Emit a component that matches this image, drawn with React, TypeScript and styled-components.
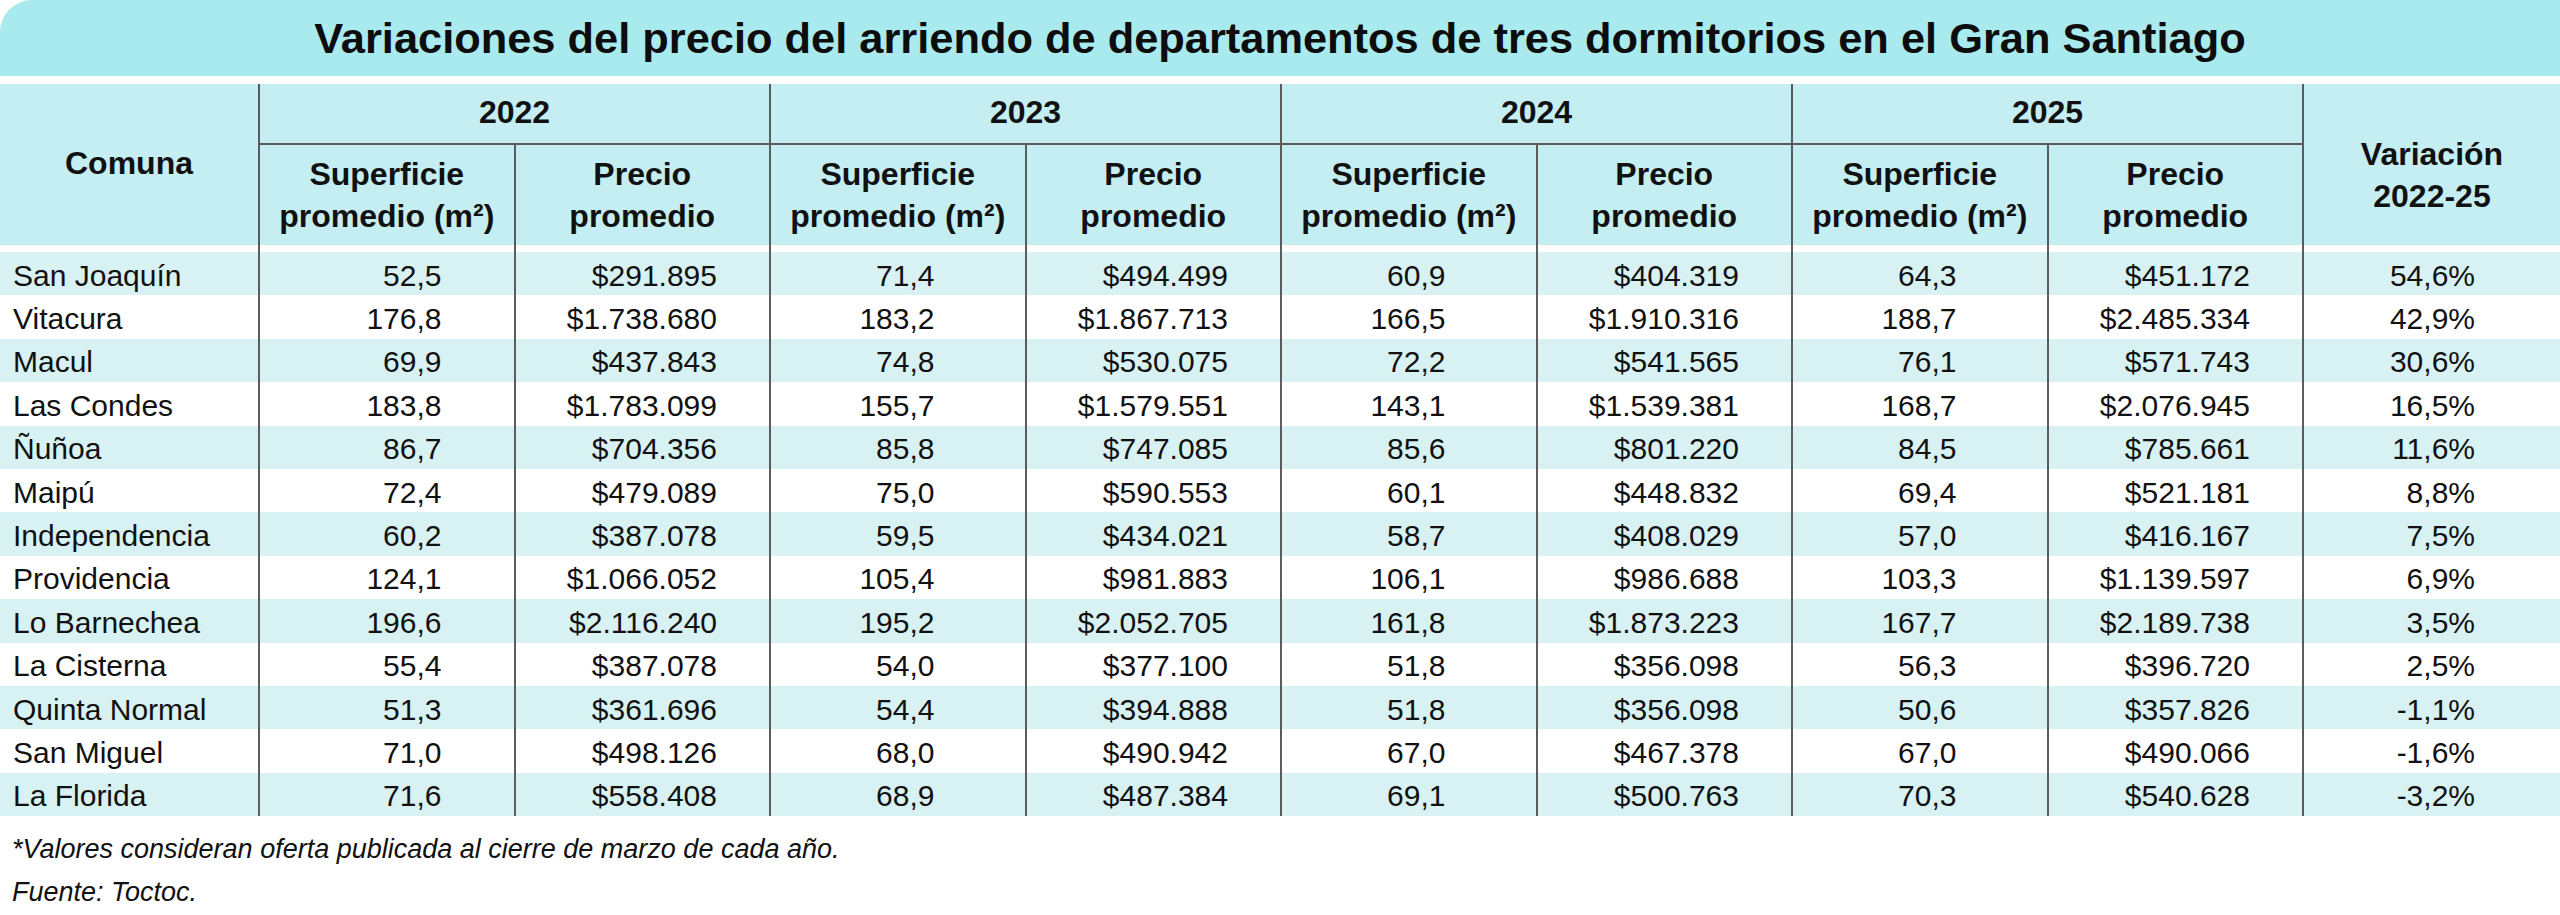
import styled, { createGlobalStyle } from "styled-components";

const GlobalStyle = createGlobalStyle`
  * {
    box-sizing: border-box;
  }
  body {
    margin: 0;
    background: #ffffff;
    font-family: "Liberation Sans", Arial, sans-serif;
    color: #111111;
  }
`;

const COLUMNS = "258px repeat(8, 255.5px) 1fr";
const LINE = "2px solid #5c5c5c";

const Page = styled.div`
  width: 2560px;
  height: 915px;
  overflow: hidden;
`;

const TitleBar = styled.h1`
  margin: 0 0 8px;
  height: 76px;
  display: flex;
  align-items: center;
  justify-content: center;
  background: #a8eaee;
  border-top-left-radius: 32px;
  font-size: 43.4px;
  font-weight: 700;
  color: #0d0d0d;
`;

const HeaderGrid = styled.div`
  display: grid;
  grid-template-columns: ${COLUMNS};
  grid-template-rows: 59px 102px;
  background: #c4eef2;
`;

const HeadCell = styled.div<{ $rows?: number; $cols?: number; $sub?: boolean; $drop?: number }>`
  grid-row: span ${(p) => p.$rows || 1};
  grid-column: span ${(p) => p.$cols || 1};
  display: flex;
  align-items: center;
  justify-content: center;
  text-align: center;
  font-size: 32px;
  font-weight: 700;
  line-height: 42px;
  padding-top: ${(p) => p.$drop || 0}px;
  padding-bottom: ${(p) => (p.$sub || p.$drop ? "0" : "4px")};
  border-top: ${(p) => (p.$sub ? LINE : "none")};

  &:not(:first-child) {
    border-left: ${LINE};
  }
`;

const Body = styled.div`
  display: flex;
  flex-direction: column;
`;

const Row = styled.div<{ $shade?: boolean; $gap?: boolean }>`
  display: grid;
  grid-template-columns: ${COLUMNS};
  height: ${(p) => (p.$gap ? "7px" : "43.4px")};
  background: ${(p) => (p.$shade ? "#d8f1f3" : "#ffffff")};
`;

const Cell = styled.div<{ $left?: boolean; $pad: number }>`
  display: flex;
  align-items: center;
  justify-content: ${(p) => (p.$left ? "flex-start" : "flex-end")};
  padding-top: 4px;
  padding-left: ${(p) => (p.$left ? p.$pad : 0)}px;
  padding-right: ${(p) => (p.$left ? 0 : p.$pad)}px;
  font-size: 30px;
  white-space: nowrap;

  &:not(:first-child) {
    border-left: ${LINE};
  }
`;

const Notes = styled.div`
  margin-top: 12px;
  padding-left: 12px;
  font-size: 27px;
  font-style: italic;
  line-height: 43px;
`;

const YEARS = ["2022", "2023", "2024", "2025"];

// padding-right for each value column, left to right
const PADS = [72, 52, 90, 52, 90, 52, 90, 52, 85];

const DATA: string[][] = [
  ["San Joaquín", "52,5", "$291.895", "71,4", "$494.499", "60,9", "$404.319", "64,3", "$451.172", "54,6%"],
  ["Vitacura", "176,8", "$1.738.680", "183,2", "$1.867.713", "166,5", "$1.910.316", "188,7", "$2.485.334", "42,9%"],
  ["Macul", "69,9", "$437.843", "74,8", "$530.075", "72,2", "$541.565", "76,1", "$571.743", "30,6%"],
  ["Las Condes", "183,8", "$1.783.099", "155,7", "$1.579.551", "143,1", "$1.539.381", "168,7", "$2.076.945", "16,5%"],
  ["Ñuñoa", "86,7", "$704.356", "85,8", "$747.085", "85,6", "$801.220", "84,5", "$785.661", "11,6%"],
  ["Maipú", "72,4", "$479.089", "75,0", "$590.553", "60,1", "$448.832", "69,4", "$521.181", "8,8%"],
  ["Independencia", "60,2", "$387.078", "59,5", "$434.021", "58,7", "$408.029", "57,0", "$416.167", "7,5%"],
  ["Providencia", "124,1", "$1.066.052", "105,4", "$981.883", "106,1", "$986.688", "103,3", "$1.139.597", "6,9%"],
  ["Lo Barnechea", "196,6", "$2.116.240", "195,2", "$2.052.705", "161,8", "$1.873.223", "167,7", "$2.189.738", "3,5%"],
  ["La Cisterna", "55,4", "$387.078", "54,0", "$377.100", "51,8", "$356.098", "56,3", "$396.720", "2,5%"],
  ["Quinta Normal", "51,3", "$361.696", "54,4", "$394.888", "51,8", "$356.098", "50,6", "$357.826", "-1,1%"],
  ["San Miguel", "71,0", "$498.126", "68,0", "$490.942", "67,0", "$467.378", "67,0", "$490.066", "-1,6%"],
  ["La Florida", "71,6", "$558.408", "68,9", "$487.384", "69,1", "$500.763", "70,3", "$540.628", "-3,2%"],
];

const App = () => {
  return (
    <Page>
      <GlobalStyle />
      <TitleBar>
        Variaciones del precio del arriendo de departamentos de tres dormitorios en el Gran Santiago
      </TitleBar>

      <HeaderGrid>
        <HeadCell $rows={2}>Comuna</HeadCell>
        {YEARS.map((y) => (
          <HeadCell key={y} $cols={2}>
            {y}
          </HeadCell>
        ))}
        <HeadCell $rows={2} $drop={20}>
          Variación
          <br />
          2022-25
        </HeadCell>
        {YEARS.map((y) => [
          <HeadCell key={y + "s"} $sub>
            Superficie
            <br />
            promedio (m²)
          </HeadCell>,
          <HeadCell key={y + "p"} $sub>
            Precio
            <br />
            promedio
          </HeadCell>,
        ])}
      </HeaderGrid>

      <Body>
        <Row $gap>
          {Array.from({ length: 10 }).map((_, i) => (
            <Cell key={i} $pad={0} />
          ))}
        </Row>
        {DATA.map((row, r) => (
          <Row key={row[0]} $shade={r % 2 === 0}>
            {row.map((v, c) => (
              <Cell key={c} $left={c === 0} $pad={c === 0 ? 13 : PADS[c - 1]}>
                {v}
              </Cell>
            ))}
          </Row>
        ))}
      </Body>

      <Notes>
        *Valores consideran oferta publicada al cierre de marzo de cada año.
        <br />
        Fuente: Toctoc.
      </Notes>
    </Page>
  );
};

export default App;
